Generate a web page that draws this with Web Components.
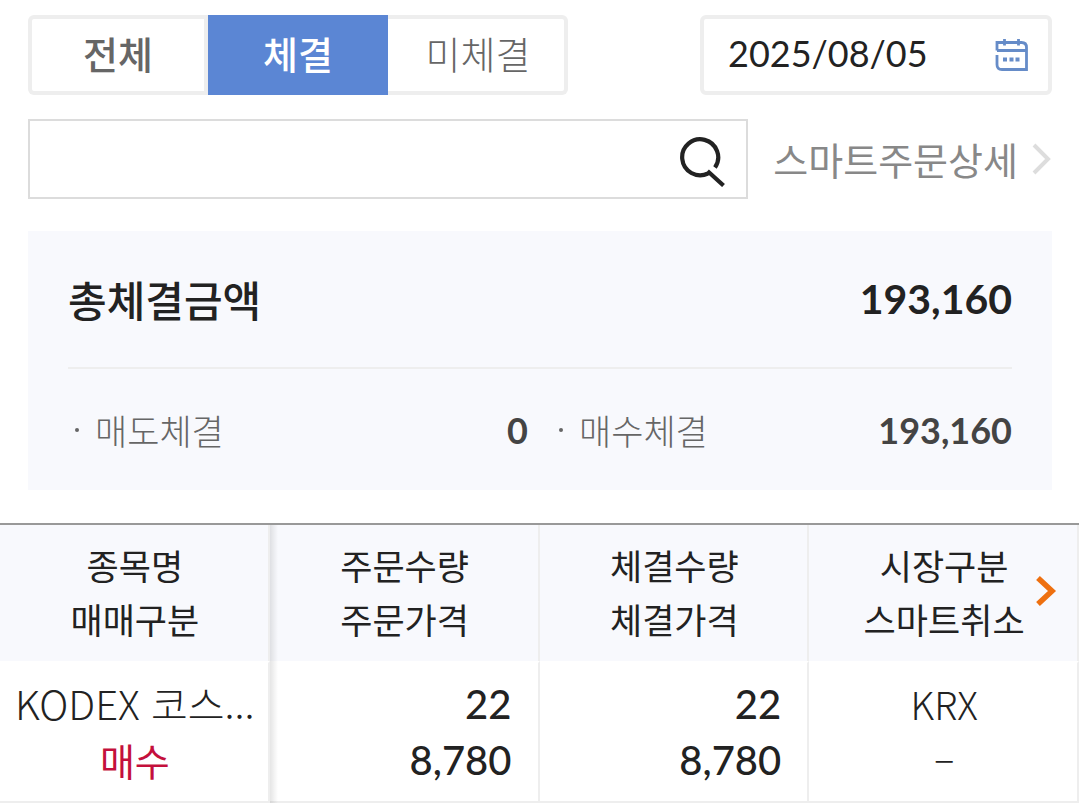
<!DOCTYPE html>
<html lang="ko">
<head>
<meta charset="utf-8">
<meta name="viewport" content="width=device-width, initial-scale=1">
<title>체결 내역</title>
<style>
  body {
    margin: 0;
    background: #fff;
    color: #222;
    font-family: Lato, "Noto Sans CJK KR", sans-serif;
  }
</style>
</head>
<body>
<order-page></order-page>

<template id="t-page">
  <style>
    :host { display: block; }
    .top { padding: 15px 27px 33px 28px; }
    .row { display: flex; align-items: center; justify-content: space-between; }
    .search { margin: 24px 0 32px; gap: 25px; }
    search-box { flex: 1; min-width: 0; }
    date-field { flex: 0 1 352px; min-width: 0; }
    tab-group { flex: 0 1 540px; }
  </style>
  <div class="top">
    <div class="row">
      <tab-group>
        <tab-item kind="strong">전체</tab-item>
        <tab-item selected>체결</tab-item>
        <tab-item>미체결</tab-item>
      </tab-group>
      <date-field value="2025/08/05"></date-field>
    </div>
    <div class="row search">
      <search-box></search-box>
      <more-link>스마트주문상세</more-link>
    </div>
    <summary-panel>
      <span slot="title">총체결금액</span>
      <span slot="total">193,160</span>
      <summary-item label="매도체결">0</summary-item>
      <summary-item label="매수체결">193,160</summary-item>
    </summary-panel>
  </div>
  <order-table></order-table>
</template>

<template id="t-tabs">
  <style>
    :host {
      display: flex; box-sizing: border-box; height: 80px; border-radius: 6px;
      box-shadow: inset 0 0 0 4px #eee;
    }
  </style>
  <slot></slot>
</template>

<template id="t-tab">
  <style>
    :host { display: block; flex: 1; }
    button {
      width: 100%; height: 100%; padding: 0 0 4px; border: 0; background: none;
      font: 300 38px/52px "Noto Sans CJK KR", sans-serif; color: #666; cursor: pointer;
    }
    :host([kind="strong"]) button { font-weight: 500; border-right: 4px solid #eee; padding-left: 4px; }
    :host([selected]) button { font-weight: 500; background: #5b86d4; color: #fff; }
  </style>
  <button type="button"><slot></slot></button>
</template>

<template id="t-date">
  <style>
    :host {
      display: flex; align-items: center; box-sizing: border-box; height: 80px;
      border: 4px solid #eee; border-radius: 6px; padding: 0 17px 0 24px;
    }
    input {
      flex: 1; min-width: 0; padding: 0 0 4px; border: 0; outline: 0; background: none;
      font: 400 36px/48px Lato, sans-serif; color: #222;
    }
    button { display: flex; padding: 0; border: 0; background: none; cursor: pointer; }
  </style>
  <input type="text" aria-label="조회일">
  <button type="button" aria-label="달력">
    <svg width="38" height="38" viewBox="0 0 38 38" fill="none" stroke="#668cc8" stroke-width="2.800">
      <path d="M4 14.500V6.500H28.500Q33.500 6.500 33.500 11.500V33.500H9Q4 33.500 4 28.500V19M4 14.500H33.500M11.500 3V9.500M25.500 3V9.500"/>
      <path d="M10 23.500h4M16.500 23.500h4M22.500 23.500h4" stroke-width="4"/>
    </svg>
  </button>
</template>

<template id="t-search">
  <style>
    :host {
      display: flex; align-items: center; box-sizing: border-box; height: 80px;
      border: 2px solid #dcdcdc; padding: 0 20px 0 24px;
    }
    input {
      flex: 1; min-width: 0; padding: 0; border: 0; outline: 0; background: none;
      font: 400 36px/48px Lato, "Noto Sans CJK KR", sans-serif; color: #222;
    }
    button { display: flex; padding: 4px 0 0; border: 0; background: none; cursor: pointer; }
  </style>
  <input type="text" aria-label="종목 검색">
  <button type="button" aria-label="검색">
    <svg width="48" height="52" viewBox="0 0 48 52" fill="none" stroke="#222" stroke-width="4.200">
      <path d="M37 32.500A18 18 0 1 0 30 38.500M29.500 36L45.500 50.500"/>
    </svg>
  </button>
</template>

<template id="t-more">
  <style>
    :host { display: block; }
    a {
      display: flex; align-items: center; gap: 14px; color: #888; text-decoration: none;
      font: 400 38px/52px "Noto Sans CJK KR", sans-serif; white-space: nowrap;
    }
  </style>
  <a href="#"><slot></slot>
    <svg width="20" height="32" viewBox="0 0 20 32" fill="none" stroke="#ddd" stroke-width="4"><path d="M2 2L16 16L2 30"/></svg>
  </a>
</template>

<template id="t-summary">
  <style>
    :host { display: block; background: #f8f9fd; padding: 0 40px; }
    .head {
      display: flex; align-items: center; justify-content: space-between;
      height: 136px; border-bottom: 2px solid #eee;
    }
    .title { font: 500 42px/60px "Noto Sans CJK KR", sans-serif; }
    .total { font: 700 41px/60px Lato, sans-serif; }
    .items { display: grid; grid-template-columns: 1fr 1fr; gap: 24px; padding: 35px 0 34px; }
  </style>
  <div class="head">
    <div class="title"><slot name="title"></slot></div>
    <div class="total"><slot name="total"></slot></div>
  </div>
  <div class="items"><slot></slot></div>
</template>

<template id="t-item">
  <style>
    :host { display: flex; justify-content: space-between; line-height: 52px; }
    .label { display: flex; font-family: "Noto Sans CJK KR", sans-serif; font-size: 35px; font-weight: 300; color: #666; }
    .label::before {
      content: ""; width: 4px; height: 4px; margin: 24px 16px 0 7px;
      border-radius: 50%; background: #666;
    }
    .value { font-size: 36px; font-weight: 700; color: #444; }
  </style>
  <span class="label"></span><span class="value"><slot></slot></span>
</template>

<template id="t-table">
  <style>
    :host { display: block; position: relative; border-top: 2px solid #999; }
    :host::after {
      content: ""; position: absolute; top: 0; bottom: 0; left: 25%; width: 8px;
      background: linear-gradient(to right, rgba(0,0,0,.1), transparent);
    }
    table { width: 100%; table-layout: fixed; border-spacing: 0; }
    th, td { border-right: 2px solid #eee; white-space: nowrap; }
    th {
      padding: 13px 0 15px 2px; background: #f8f9fd; position: relative;
      font: 400 35px/54px "Noto Sans CJK KR", sans-serif;
    }
    td {
      padding: 12px 0 13px 2px; border-top: 2px solid #fff; border-bottom: 2px solid #eee;
      font: 300 38px/56px "Noto Sans CJK KR", sans-serif; text-align: center;
    }
    td.name { font-size: 40px; }
    td.num { padding-right: 26px; font: 500 40px/56px Lato, sans-serif; text-align: right; }
    .buy { color: #c4103c; font-size: 38px; font-weight: 400; }
    button {
      position: absolute; right: 20px; top: 50%; margin-top: -18px;
      display: flex; padding: 0; border: 0; background: none; cursor: pointer;
    }
  </style>
  <table>
    <thead>
      <tr>
        <th scope="col">종목명<br>매매구분</th>
        <th scope="col">주문수량<br>주문가격</th>
        <th scope="col">체결수량<br>체결가격</th>
        <th scope="col">시장구분<br>스마트취소
          <button type="button" aria-label="다음 항목">
            <svg width="22" height="32" viewBox="0 0 22 32" fill="none" stroke="#ee7010" stroke-width="5.500"><path d="M3 3L17 16L3 29"/></svg>
          </button>
        </th>
      </tr>
    </thead>
    <tbody>
      <tr>
        <td class="name">KODEX 코스...<br><span class="buy">매수</span></td>
        <td class="num">22<br>8,780</td>
        <td class="num">22<br>8,780</td>
        <td>KRX<br>–</td>
      </tr>
    </tbody>
  </table>
</template>

<script>
  class Base extends HTMLElement {
    constructor() {
      super();
      const tpl = document.getElementById(this.constructor.template);
      this.attachShadow({ mode: "open" }).append(tpl.content.cloneNode(true));
    }
  }
  const element = (name, template, connect) => {
    customElements.define(name, class extends Base {
      static template = template;
      connectedCallback() { if (connect) connect(this, this.shadowRoot); }
    });
  };

  element("tab-group", "t-tabs");
  element("tab-item", "t-tab", (host, root) => {
    root.querySelector("button").setAttribute("aria-pressed", host.hasAttribute("selected"));
  });
  element("date-field", "t-date", (host, root) => {
    root.querySelector("input").value = host.getAttribute("value");
  });
  element("search-box", "t-search");
  element("more-link", "t-more");
  element("summary-panel", "t-summary");
  element("summary-item", "t-item", (host, root) => {
    root.querySelector(".label").textContent = host.getAttribute("label");
  });
  element("order-table", "t-table");
  element("order-page", "t-page");
</script>
</body>
</html>
